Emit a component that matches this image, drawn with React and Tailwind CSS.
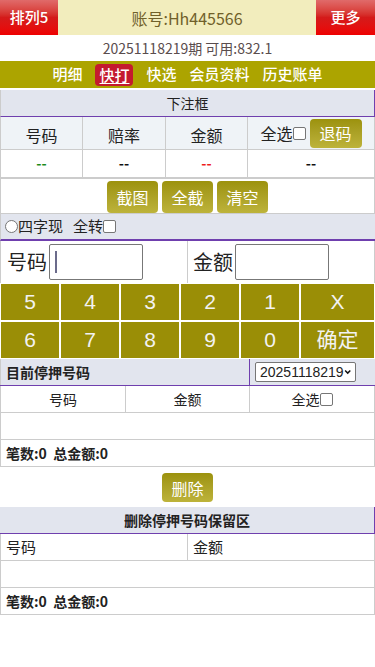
import { useState } from "react"

const font = { fontFamily: '"Noto Sans CJK SC", "Liberation Sans", sans-serif' }

function OliveBtn({ children, className = "" }) {
  return (
    <button className={`rounded-[4px] bg-gradient-to-b from-[#9c920c] to-[#bdb33a] text-white text-[16px] leading-none ${className}`}>
      {children}
    </button>
  )
}

function Check() {
  return <span className="inline-block w-[13px] h-[13px] border border-[#767676] rounded-[2px] bg-white align-middle" />
}

export default function App() {
  const [tab] = useState("快打")
  const navs = ["明细", "快打", "快选", "会员资料", "历史账单"]
  const keys = [["5", "4", "3", "2", "1", "X"], ["6", "7", "8", "9", "0", "确定"]]

  return (
    <div className="w-[375px] bg-white text-[#222]" style={font}>
      {/* top bar */}
      <div className="flex h-[35px]">
        <div className="w-[58px] flex items-center justify-center bg-gradient-to-b from-[#e06a6a] via-[#d41a1a] to-[#ee0000] text-white font-medium text-[15px]">排列5</div>
        <div className="flex-1 flex items-center justify-center bg-[#f2edbd] text-[#70602a] text-[16px]">账号:Hh445566</div>
        <div className="w-[59px] flex items-center justify-center bg-gradient-to-b from-[#e06a6a] via-[#d41a1a] to-[#ee0000] text-white font-medium text-[15px]">更多</div>
      </div>
      <div className="h-[26px] flex items-center justify-center text-[14px] text-[#5a4d4d]">20251118219期 可用:832.1</div>
      <div className="h-[27px] bg-[#aca400] flex items-center justify-center gap-[13px] text-white text-[15px] font-medium">
        {navs.map(n => (
          <span key={n} className={n === tab ? "bg-[#c41a2e] rounded-[4px] px-[4px] underline underline-offset-2 leading-[22px]" : ""}>{n}</span>
        ))}
      </div>

      {/* 下注框 */}
      <div className="mt-[2px] h-[27px] bg-[#e2e5ee] border-l border-l-[#ccc] border-r border-b border-[#6f3fae] flex items-center justify-center text-[14px]">下注框</div>
      <div className="grid grid-cols-[82px_83px_82px_1fr] border-l border-[#ccc]">
        {["号码", "赔率", "金额"].map(t => (
          <div key={t} className="h-[33px] bg-[#eff3f7] border-r border-b border-[#ccc] flex items-center justify-center text-[16px] pt-[3px]">{t}</div>
        ))}
        <div className="h-[33px] bg-[#eff3f7] border-r border-b border-[#ccc] flex items-center justify-center text-[16px] gap-[2px]">
          <span className="flex items-center">全选<Check /></span>
          <OliveBtn className="w-[52px] h-[29px] ml-[2px]">退码</OliveBtn>
        </div>
        {[["--", "text-[#1a8a1a]"], ["--", "text-[#111]"], ["--", "text-[#ee1c1c]"], ["--", "text-[#111]"]].map(([t, c], i) => (
          <div key={i} className={`h-[28px] border-r border-b border-[#ccc] flex items-center justify-center font-bold text-[14px] ${c}`}>{t}</div>
        ))}
      </div>
      <div className="h-[35px] border-t border-[#ccc] border-l border-r flex items-center justify-center gap-[4px] pt-[2px]">
        <OliveBtn className="w-[51px] h-[32px]">截图</OliveBtn>
        <OliveBtn className="w-[51px] h-[32px]">全截</OliveBtn>
        <OliveBtn className="w-[51px] h-[32px]">清空</OliveBtn>
      </div>
      <div className="h-[28px] bg-[#e2e5ee] border-t border-[#ccc] border-l border-b-[2px] border-b-[#6f3fae] flex items-center px-[4px] text-[15px]">
        <span className="inline-block w-[13px] h-[13px] rounded-full border border-[#767676] bg-white" />
        <span>四字现</span>
        <span className="ml-[10px]">全转</span>
        <Check />
      </div>
      <div className="h-[42px] flex border-l border-r border-[#ccc]">
        <div className="w-[187px] border-r border-[#ccc] flex items-center pl-[6px] gap-[2px]">
          <span className="text-[20px]">号码</span>
          <div className="w-[94px] h-[36px] border border-[#777] rounded-[2px] flex items-center pl-[5px]">
            <span className="w-[2px] h-[22px] bg-[#6b6b8b]" />
          </div>
        </div>
        <div className="flex-1 flex items-center pl-[5px] gap-[2px]">
          <span className="text-[20px]">金额</span>
          <div className="w-[94px] h-[36px] border border-[#777] rounded-[2px]" />
        </div>
      </div>

      {/* keypad */}
      <div className="grid grid-cols-[58px_58px_58px_58px_58px_1fr] gap-[2px] px-[1px] py-[1px]" style={{ fontFamily: '"Liberation Sans", "Noto Sans CJK SC", sans-serif' }}>
        {keys.flat().map(k => (
          <div key={k} className="h-[36px] bg-[#9a8e06] text-[#f2f2f2] text-[21px] flex items-center justify-center">{k}</div>
        ))}
      </div>

      {/* 目前停押号码 */}
      <div className="h-[27px] flex bg-[#e2e5ee] border-b border-[#6f3fae]">
        <div className="w-[249px] flex items-center pl-[5px] font-bold text-[14px] border-l border-[#ccc]">目前停押号码</div>
        <div className="flex-1 border-l border-[#6f3fae] flex items-center pl-[5px]">
          <div className="w-[101px] h-[20px] bg-white border border-[#767676] rounded-[2px] flex items-center justify-between px-[4px] text-[14px]" style={{ fontFamily: '"Liberation Sans", sans-serif' }}>
            <span>20251118219</span>
            <svg width="10" height="8" viewBox="0 0 10 8"><path d="M1.5 2 L5 5.5 L8.5 2" stroke="#111" strokeWidth="2" fill="none" /></svg>
          </div>
        </div>
      </div>
      <div className="border-l border-r border-[#ccc]">
        <div className="grid grid-cols-[125px_124px_1fr] h-[27px] border-b border-[#ccc] text-[14px]">
          <div className="flex items-center justify-center border-r border-[#ccc]">号码</div>
          <div className="flex items-center justify-center border-r border-[#ccc]">金额</div>
          <div className="flex items-center justify-center">全选<Check /></div>
        </div>
        <div className="h-[27px] border-b border-[#ccc]" />
        <div className="h-[27px] border-b border-[#ccc] flex items-center pl-[5px] font-bold text-[14px]">笔数:0&nbsp;&nbsp;总金额:0</div>
      </div>
      <div className="h-[40px] flex items-center justify-center pt-[1px]">
        <OliveBtn className="w-[51px] h-[29px]">删除</OliveBtn>
      </div>

      {/* 保留区 */}
      <div className="h-[27px] bg-[#e2e5ee] border-r border-b border-[#6f3fae] flex items-center justify-center font-bold text-[14px]">删除停押号码保留区</div>
      <div className="border-l border-r border-[#ccc]">
        <div className="grid grid-cols-[187px_1fr] h-[27px] border-b border-[#ccc] text-[15px]">
          <div className="flex items-center pl-[5px] border-r border-[#ccc]">号码</div>
          <div className="flex items-center pl-[5px]">金额</div>
        </div>
        <div className="h-[27px] border-b border-[#ccc]" />
        <div className="h-[27px] border-b border-[#ccc] flex items-center pl-[5px] font-bold text-[14px]">笔数:0&nbsp;&nbsp;总金额:0</div>
      </div>
    </div>
  )
}
